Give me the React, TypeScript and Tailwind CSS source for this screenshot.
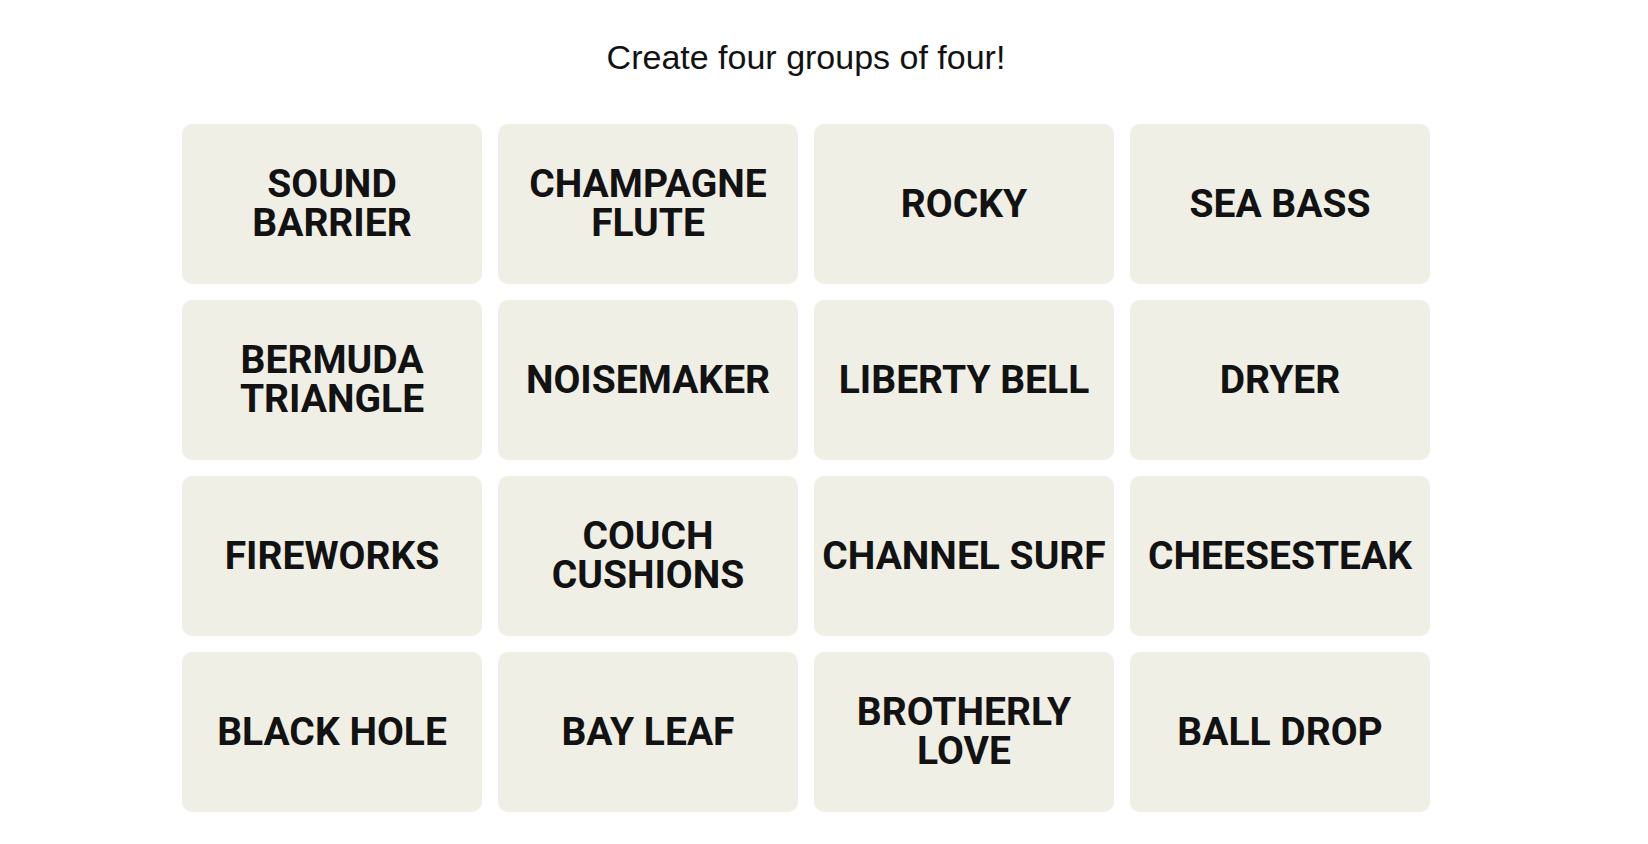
const WORDS: string[][] = [
  ["SOUND", "BARRIER"],
  ["CHAMPAGNE", "FLUTE"],
  ["ROCKY"],
  ["SEA BASS"],
  ["BERMUDA", "TRIANGLE"],
  ["NOISEMAKER"],
  ["LIBERTY BELL"],
  ["DRYER"],
  ["FIREWORKS"],
  ["COUCH", "CUSHIONS"],
  ["CHANNEL SURF"],
  ["CHEESESTEAK"],
  ["BLACK HOLE"],
  ["BAY LEAF"],
  ["BROTHERLY", "LOVE"],
  ["BALL DROP"],
];

function Tile({ lines }: { lines: string[] }) {
  return (
    <button
      className="flex h-[160px] w-[300px] flex-col items-center justify-center rounded-[10px] bg-[#efefe6] px-1 text-[39px] font-bold leading-[39px] text-[#121212]"
      style={{ fontFamily: "Roboto, 'Liberation Sans', sans-serif" }}
    >
      {lines.map((l) => (
        <span key={l} className="whitespace-nowrap">
          {l}
        </span>
      ))}
    </button>
  );
}

export default function App() {
  return (
    <div
      className="min-h-[844px] bg-white pl-[182px] pt-[37px]"
      style={{ fontFamily: '"Liberation Sans", Arial, sans-serif' }}
    >
      <div className="w-[1248px]">
        <p className="text-center text-[34px] leading-[40px] text-[#121212]">
          Create four groups of four!
        </p>
        <div className="mt-[47px] grid grid-cols-4 gap-4">
          {WORDS.map((w, i) => (
            <Tile key={i} lines={w} />
          ))}
        </div>
      </div>
    </div>
  );
}
